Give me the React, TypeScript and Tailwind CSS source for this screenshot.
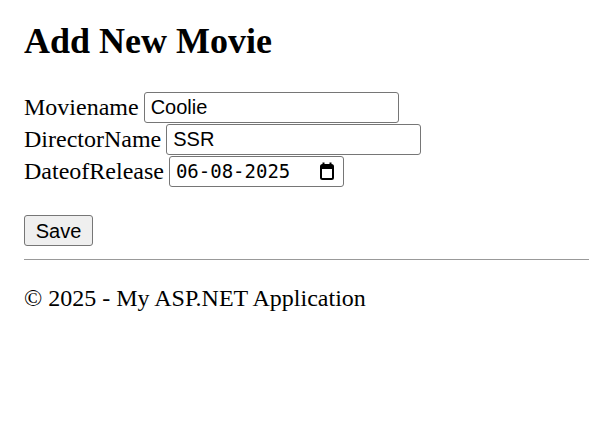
export default function App() {
  return (
    <div className="min-h-screen bg-white pl-[24px] text-black">
      <h1 className="pt-[21px] text-[36px] font-bold leading-[40px] [font-family:'Liberation_Serif',serif]">
        Add New Movie
      </h1>

      <form className="mt-[30px] flex flex-col text-[24px] [font-family:'Liberation_Serif',serif]">
        <div className="flex h-[32px] items-center gap-[5px]">
          <span>Moviename</span>
          <input
            readOnly
            value="Coolie"
            className="h-[31px] w-[255px] rounded-[3px] border border-[#767676] px-[6px] text-[20px] [font-family:'Liberation_Sans',sans-serif] outline-none"
          />
        </div>
        <div className="flex h-[32px] items-center gap-[5px]">
          <span>DirectorName</span>
          <input
            readOnly
            value="SSR"
            className="h-[31px] w-[255px] rounded-[3px] border border-[#767676] px-[6px] text-[20px] [font-family:'Liberation_Sans',sans-serif] outline-none"
          />
        </div>
        <div className="flex h-[32px] items-center gap-[5px]">
          <span>DateofRelease</span>
          <div className="flex h-[31px] w-[175px] items-center justify-between rounded-[3px] border border-[#767676] pl-[6px] pr-[9px]">
            <span className="text-[19px] [font-family:'DejaVu_Sans_Mono',monospace]">06-08-2025</span>
            <svg width="14" height="18" viewBox="0 0 14 18" fill="none">
              <rect x="1" y="3" width="12" height="14" rx="1.5" stroke="black" strokeWidth="2" />
              <rect x="1" y="3" width="12" height="4" fill="black" />
              <rect x="2.5" y="0.5" width="2" height="3" fill="black" />
              <rect x="9.5" y="0.5" width="2" height="3" fill="black" />
            </svg>
          </div>
        </div>

        <div className="mt-[25px]">
          <button
            type="button"
            className="h-[31px] w-[69px] rounded-[3px] border border-[#767676] bg-[#efefef] text-[20px] [font-family:'Liberation_Sans',sans-serif]"
          >
            Save
          </button>
        </div>
      </form>

      <hr className="mt-[11px] border-t border-[#999]" />

      <footer className="mt-[20px] text-[24px] [font-family:'Liberation_Serif',serif]">
        © 2025 - My ASP.NET Application
      </footer>
    </div>
  )
}
